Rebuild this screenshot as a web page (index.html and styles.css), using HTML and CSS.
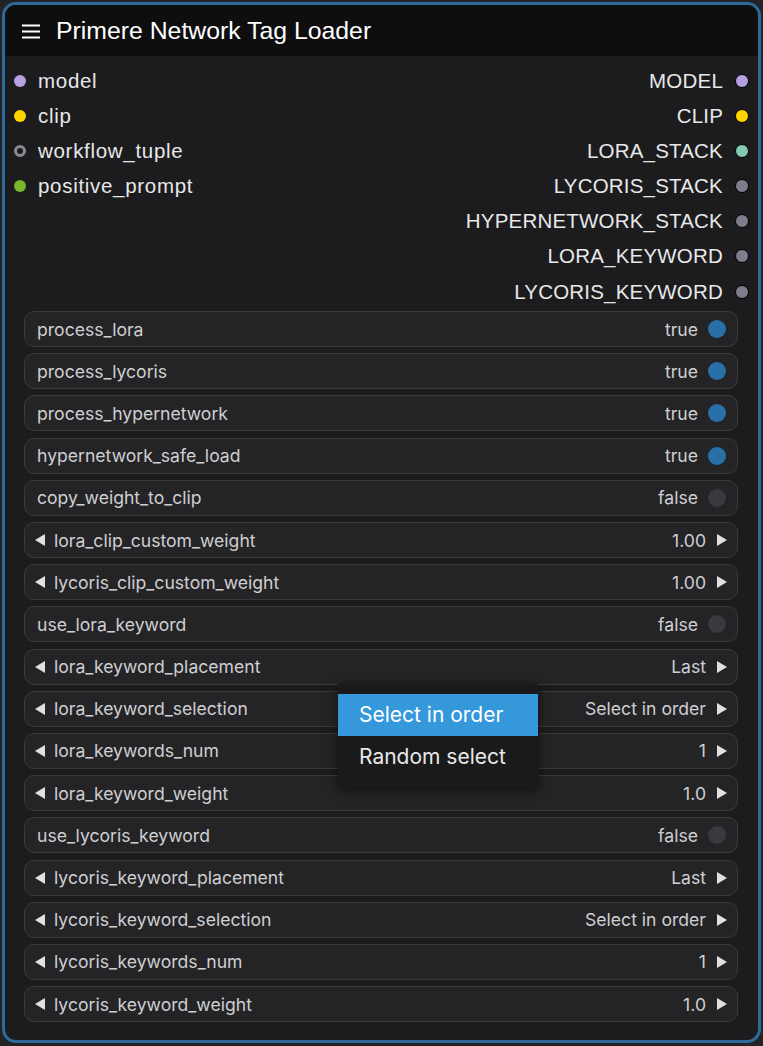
FILE: index.html
```html
<!DOCTYPE html>
<html>
<head>
<meta charset="utf-8">
<link rel="stylesheet" href="styles.css">
</head>
<body>
<div class="node">
  <div class="title">
    <svg class="menu-icon" width="20" height="16" viewBox="0 0 20 16"><path d="M1 2.5h18M1 8.5h18M1 14.5h18" stroke="#fff" stroke-width="2"/></svg>
    <span>Primere Network Tag Loader</span>
  </div>
  <div class="slots">
    <div class="inputs">
      <div class="slot"><i class="dot" style="background:#b6a0e0"></i>model</div>
      <div class="slot"><i class="dot" style="background:#ffd500"></i>clip</div>
      <div class="slot"><i class="dot ring"></i>workflow_tuple</div>
      <div class="slot"><i class="dot" style="background:#7bb72a"></i>positive_prompt</div>
    </div>
    <div class="outputs">
      <div class="slot">MODEL<i class="dot out" style="background:#b6a0e0"></i></div>
      <div class="slot">CLIP<i class="dot out" style="background:#ffd500"></i></div>
      <div class="slot">LORA_STACK<i class="dot out" style="background:#80cbb1"></i></div>
      <div class="slot">LYCORIS_STACK<i class="dot out"></i></div>
      <div class="slot">HYPERNETWORK_STACK<i class="dot out"></i></div>
      <div class="slot">LORA_KEYWORD<i class="dot out"></i></div>
      <div class="slot">LYCORIS_KEYWORD<i class="dot out"></i></div>
    </div>
  </div>
  <div class="widgets">
    <div class="w"><span class="lbl">process_lora</span><span class="val">true</span><i class="tog on"></i></div>
    <div class="w"><span class="lbl">process_lycoris</span><span class="val">true</span><i class="tog on"></i></div>
    <div class="w"><span class="lbl">process_hypernetwork</span><span class="val">true</span><i class="tog on"></i></div>
    <div class="w"><span class="lbl">hypernetwork_safe_load</span><span class="val">true</span><i class="tog on"></i></div>
    <div class="w"><span class="lbl">copy_weight_to_clip</span><span class="val">false</span><i class="tog"></i></div>
    <div class="w num"><i class="al"></i><span class="lbl">lora_clip_custom_weight</span><span class="val">1.00</span><i class="ar"></i></div>
    <div class="w num"><i class="al"></i><span class="lbl">lycoris_clip_custom_weight</span><span class="val">1.00</span><i class="ar"></i></div>
    <div class="w"><span class="lbl">use_lora_keyword</span><span class="val">false</span><i class="tog"></i></div>
    <div class="w num"><i class="al"></i><span class="lbl">lora_keyword_placement</span><span class="val">Last</span><i class="ar"></i></div>
    <div class="w num"><i class="al"></i><span class="lbl">lora_keyword_selection</span><span class="val">Select in order</span><i class="ar"></i></div>
    <div class="w num"><i class="al"></i><span class="lbl">lora_keywords_num</span><span class="val">1</span><i class="ar"></i></div>
    <div class="w num"><i class="al"></i><span class="lbl">lora_keyword_weight</span><span class="val">1.0</span><i class="ar"></i></div>
    <div class="w"><span class="lbl">use_lycoris_keyword</span><span class="val">false</span><i class="tog"></i></div>
    <div class="w num"><i class="al"></i><span class="lbl">lycoris_keyword_placement</span><span class="val">Last</span><i class="ar"></i></div>
    <div class="w num"><i class="al"></i><span class="lbl">lycoris_keyword_selection</span><span class="val">Select in order</span><i class="ar"></i></div>
    <div class="w num"><i class="al"></i><span class="lbl">lycoris_keywords_num</span><span class="val">1</span><i class="ar"></i></div>
    <div class="w num"><i class="al"></i><span class="lbl">lycoris_keyword_weight</span><span class="val">1.0</span><i class="ar"></i></div>
  </div>
</div>
<div class="ctx">
  <div class="item active">Select in order</div>
  <div class="item">Random select</div>
</div>
</body>
</html>
```
FILE: styles.css
```css
html, body { margin: 0; padding: 0; }
body {
  background: #232325;
  width: 763px;
  height: 1046px;
  overflow: hidden;
  position: relative;
}
.node {
  margin: 2px 2px 0 2px;
  height: 1041px;
  box-sizing: border-box;
  border: 3px solid #2e6b9b;
  border-radius: 14px;
  background: #1c1c1e;
  overflow: hidden;
  display: flex;
  flex-direction: column;
}
.title {
  height: 51px;
  background: #0e0e0f;
  display: flex;
  align-items: center;
  gap: 15px;
  padding-left: 16px;
  color: #fff;
  font-family: "Liberation Sans", Arial, sans-serif;
  font-size: 24.8px;
  flex-shrink: 0;
}
.menu-icon { display: block; margin-top: 1px; }
.slots {
  display: flex;
  justify-content: space-between;
  padding: 7px 10px 0 9px;
  font-family: "Liberation Sans", Arial, sans-serif;
  font-size: 20.5px;
  letter-spacing: 0.2px;
  color: #e8e8e8;
}
.inputs, .outputs { display: flex; flex-direction: column; }
.inputs { letter-spacing: 0.7px; }
.outputs { align-items: flex-end; }
.slot {
  height: 35.17px;
  display: flex;
  align-items: center;
  gap: 12px;
}
.dot {
  width: 12px;
  height: 12px;
  border-radius: 50%;
  display: block;
  box-sizing: border-box;
}
.dot.out {
  background: #7e7d8c;
  border: 1px solid #000;
  width: 14px;
  height: 14px;
  margin-right: -1px;
}
.dot.ring {
  background: #1c1c1e;
  border: 3.5px solid #8a8996;
}
.widgets {
  display: flex;
  flex-direction: column;
  gap: 6.19px;
  padding: 2px 20px 0 19px;
  font-family: Inter, "Noto Sans", sans-serif;
  font-size: 17.6px;
  color: #cfcfd1;
}
.w {
  height: 36px;
  box-sizing: border-box;
  border: 1.5px solid #3a3a3d;
  border-radius: 10px;
  background: #242427;
  display: flex;
  align-items: center;
  padding: 0 11px 0 12px;
}
.w.num { padding: 0 10px 0 10px; }
.lbl { flex: 1; }
.val { margin-right: 10px; }
.tog {
  width: 18px;
  height: 18px;
  border-radius: 50%;
  background: #3a3a3e;
  display: block;
}
.tog.on { background: #2a70a8; }
.al, .ar {
  width: 0; height: 0;
  display: block;
  border-top: 6px solid transparent;
  border-bottom: 6px solid transparent;
}
.al { border-right: 10px solid #e0e0e0; margin-right: 9px; }
.ar { border-left: 10px solid #e0e0e0; }
.num .val { margin-right: 11px; }
.ctx {
  position: absolute;
  left: 338px;
  top: 684px;
  width: 200px;
  padding: 10px 0;
  background: #1a1a1b;
  box-shadow: 0 2px 10px rgba(0,0,0,0.6);
  font-family: Inter, "Noto Sans", sans-serif;
  font-size: 21px;
  color: #e8e8e8;
}
.item {
  height: 42px;
  line-height: 42px;
  padding-left: 21px;
}
.item.active { background: #3498db; color: #fff; }
```
